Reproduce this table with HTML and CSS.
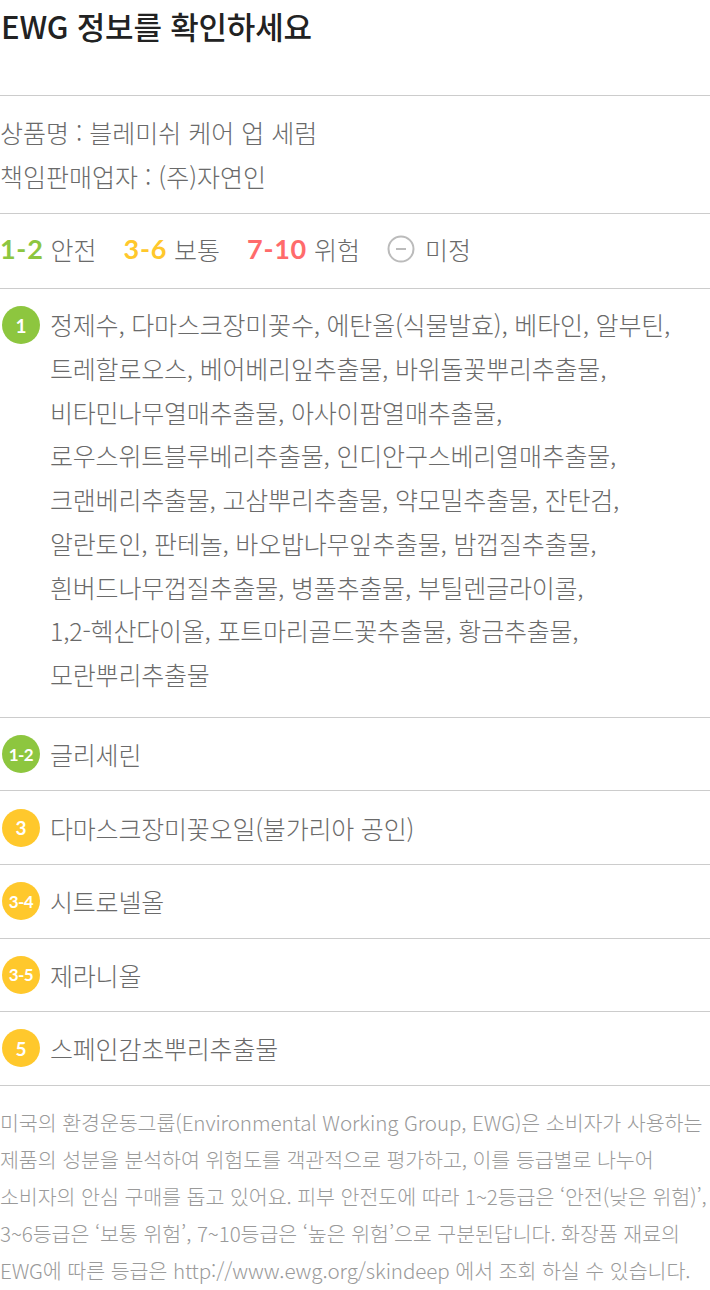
FILE: index.html
```html
<!DOCTYPE html>
<html lang="ko">
<head>
<meta charset="utf-8">
<title>EWG 정보</title>
<link rel="stylesheet" href="styles.css">
</head>
<body>
<div class="page">
  <h1 class="title">EWG 정보를 확인하세요</h1>

  <section class="info">
    <p>상품명 : 블레미쉬 케어 업 세럼</p>
    <p>책임판매업자 : (주)자연인</p>
  </section>

  <section class="legend">
    <span class="lg-num green">1-2</span><span class="lg-label">안전</span>
    <span class="lg-num yellow">3-6</span><span class="lg-label">보통</span>
    <span class="lg-num red">7-10</span><span class="lg-label">위험</span>
    <span class="lg-none"><svg width="28" height="28" viewBox="0 0 28 28"><circle cx="14" cy="14" r="12.5" fill="none" stroke="#bbb" stroke-width="2"/><line x1="9" y1="14" x2="19" y2="14" stroke="#bbb" stroke-width="2"/></svg></span><span class="lg-label">미정</span>
  </section>

  <ul class="ingredients">
    <li class="row multi">
      <span class="badge green">1</span>
      <p class="names">정제수, 다마스크장미꽃수, 에탄올(식물발효), 베타인, 알부틴,<br>트레할로오스, 베어베리잎추출물, 바위돌꽃뿌리추출물,<br>비타민나무열매추출물, 아사이팜열매추출물,<br>로우스위트블루베리추출물, 인디안구스베리열매추출물,<br>크랜베리추출물, 고삼뿌리추출물, 약모밀추출물, 잔탄검,<br>알란토인, 판테놀, 바오밥나무잎추출물, 밤껍질추출물,<br>흰버드나무껍질추출물, 병풀추출물, 부틸렌글라이콜,<br>1,2-헥산다이올, 포트마리골드꽃추출물, 황금추출물,<br>모란뿌리추출물</p>
    </li>
    <li class="row">
      <span class="badge green small">1-2</span>
      <p class="names">글리세린</p>
    </li>
    <li class="row">
      <span class="badge yellow">3</span>
      <p class="names">다마스크장미꽃오일(불가리아 공인)</p>
    </li>
    <li class="row">
      <span class="badge yellow small">3-4</span>
      <p class="names">시트로넬올</p>
    </li>
    <li class="row">
      <span class="badge yellow small">3-5</span>
      <p class="names">제라니올</p>
    </li>
    <li class="row">
      <span class="badge yellow">5</span>
      <p class="names">스페인감초뿌리추출물</p>
    </li>
  </ul>

  <p class="note">미국의 환경운동그룹(Environmental Working Group, EWG)은 소비자가 사용하는<br>제품의 성분을 분석하여 위험도를 객관적으로 평가하고, 이를 등급별로 나누어<br>소비자의 안심 구매를 돕고 있어요. 피부 안전도에 따라 1~2등급은 ‘안전(낮은 위험)’,<br>3~6등급은 ‘보통 위험’, 7~10등급은 ‘높은 위험’으로 구분된답니다. 화장품 재료의<br>EWG에 따른 등급은 http://www.ewg.org/skindeep 에서 조회 하실 수 있습니다.</p>
</div>
</body>
</html>
```

FILE: styles.css
```css
* { box-sizing: border-box; }
html, body { margin: 0; padding: 0; background: #fff; }
body {
  font-family: "Noto Sans CJK KR", "Noto Sans", sans-serif;
  font-weight: 300;
  color: #666;
}
.page { width: 710px; }
p { margin: 0; }

.title {
  margin: 0;
  padding: 0 0 0 1px;
  height: 96px;
  font-size: 31px;
  line-height: 52px;
  font-weight: 500;
  color: #222;
  letter-spacing: -0.2px;
  border-bottom: 1px solid #ccc;
}

.info {
  padding: 14px 0 15px;
  border-bottom: 1px solid #ccc;
  font-size: 25px;
  line-height: 44px;
  letter-spacing: 0;
  color: #6a6a6a;
}

.legend {
  display: flex;
  align-items: center;
  padding: 16px 0 20px;
  height: 75px;
  border-bottom: 1px solid #ccc;
}
.lg-num {
  font-family: "Lato", "Noto Sans", sans-serif;
  font-weight: 700;
  font-size: 27px;
  letter-spacing: 0.7px;
  line-height: 38px;
  margin-right: 7px;
}
.lg-label {
  font-size: 25px;
  line-height: 38px;
  color: #6a6a6a;
  margin-right: 27px;
}
.lg-none { display: flex; margin-left: 0; margin-right: 10px; }
.green { color: #8dc63f; }
.yellow { color: #ffc82c; }
.red { color: #ff6b6b; }

.ingredients { list-style: none; margin: 0; padding: 0; }
.row {
  display: flex;
  align-items: center;
  gap: 10px;
  padding: 17.3px 0;
  border-bottom: 1px solid #ccc;
}
.row.multi { align-items: flex-start; padding: 14px 0 20px; }
.badge {
  flex: none;
  width: 38px;
  height: 38px;
  margin-left: 2px;
  border-radius: 50%;
  display: flex;
  align-items: center;
  justify-content: center;
  color: #fff;
  font-family: "Lato", "Noto Sans", sans-serif;
  font-weight: 700;
  font-size: 19px;
}
.multi .badge { margin-top: 3px; }
.badge.small { font-size: 17px; letter-spacing: -0.6px; }
.badge.green { background: #8dc63f; color: #fff; }
.badge.yellow { background: #ffc82c; color: #fff; }
.names {
  font-size: 25px;
  line-height: 38px;
  letter-spacing: -0.2px;
  color: #6a6a6a;
  white-space: nowrap;
}
.multi .names { line-height: 43.75px; }

.note {
  padding: 18px 0 0;
  font-size: 20.6px;
  line-height: 37px;
  letter-spacing: -0.1px;
  color: #9a9a9a;
  white-space: nowrap;
}
```
